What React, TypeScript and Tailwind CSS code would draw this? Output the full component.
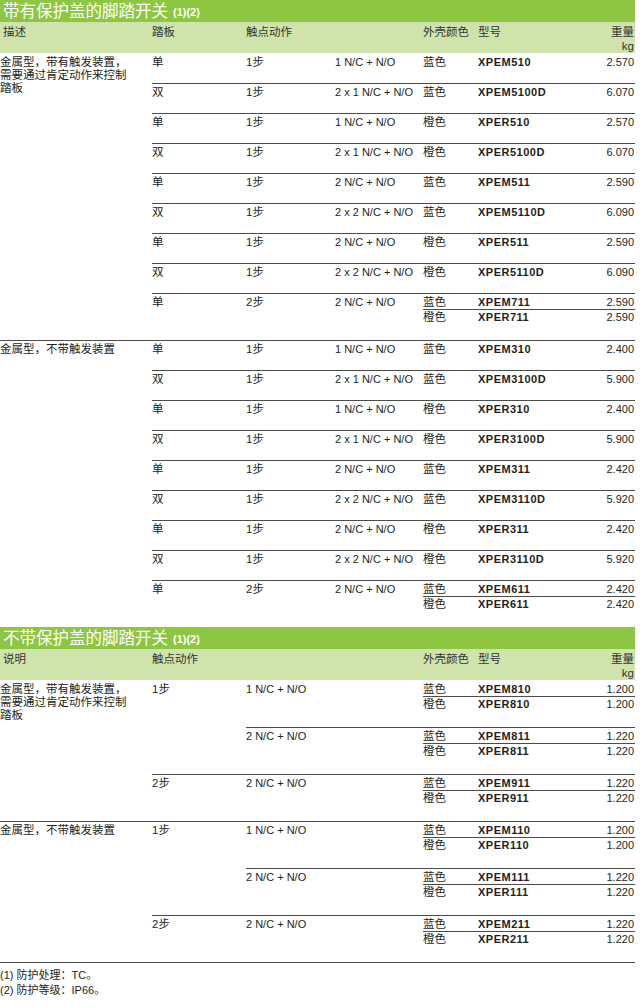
import React from 'react';

type Sub = { color: string; model: string; weight: string };
type Row = { pedal: string; step: string; contact: string; subs: Sub[] };

const descA = ['金属型，带有触发装置，', '需要通过肯定动作来控制', '踏板'];
const descB = ['金属型，不带触发装置'];

const blue = (model: string, weight: string): Sub => ({ color: '蓝色', model, weight });
const orange = (model: string, weight: string): Sub => ({ color: '橙色', model, weight });

const groupA: Row[] = [
  { pedal: '单', step: '1步', contact: '1 N/C + N/O', subs: [blue('XPEM510', '2.570')] },
  { pedal: '双', step: '1步', contact: '2 x 1 N/C + N/O', subs: [blue('XPEM5100D', '6.070')] },
  { pedal: '单', step: '1步', contact: '1 N/C + N/O', subs: [orange('XPER510', '2.570')] },
  { pedal: '双', step: '1步', contact: '2 x 1 N/C + N/O', subs: [orange('XPER5100D', '6.070')] },
  { pedal: '单', step: '1步', contact: '2 N/C + N/O', subs: [blue('XPEM511', '2.590')] },
  { pedal: '双', step: '1步', contact: '2 x 2 N/C + N/O', subs: [blue('XPEM5110D', '6.090')] },
  { pedal: '单', step: '1步', contact: '2 N/C + N/O', subs: [orange('XPER511', '2.590')] },
  { pedal: '双', step: '1步', contact: '2 x 2 N/C + N/O', subs: [orange('XPER5110D', '6.090')] },
  { pedal: '单', step: '2步', contact: '2 N/C + N/O', subs: [blue('XPEM711', '2.590'), orange('XPER711', '2.590')] },
];

const groupB: Row[] = [
  { pedal: '单', step: '1步', contact: '1 N/C + N/O', subs: [blue('XPEM310', '2.400')] },
  { pedal: '双', step: '1步', contact: '2 x 1 N/C + N/O', subs: [blue('XPEM3100D', '5.900')] },
  { pedal: '单', step: '1步', contact: '1 N/C + N/O', subs: [orange('XPER310', '2.400')] },
  { pedal: '双', step: '1步', contact: '2 x 1 N/C + N/O', subs: [orange('XPER3100D', '5.900')] },
  { pedal: '单', step: '1步', contact: '2 N/C + N/O', subs: [blue('XPEM311', '2.420')] },
  { pedal: '双', step: '1步', contact: '2 x 2 N/C + N/O', subs: [blue('XPEM3110D', '5.920')] },
  { pedal: '单', step: '1步', contact: '2 N/C + N/O', subs: [orange('XPER311', '2.420')] },
  { pedal: '双', step: '1步', contact: '2 x 2 N/C + N/O', subs: [orange('XPER3110D', '5.920')] },
  { pedal: '单', step: '2步', contact: '2 N/C + N/O', subs: [blue('XPEM611', '2.420'), orange('XPER611', '2.420')] },
];

type Contact = { contact: string; subs: Sub[] };
type Step = { step: string; contacts: Contact[] };

const open1: Step[] = [
  {
    step: '1步',
    contacts: [
      { contact: '1 N/C + N/O', subs: [blue('XPEM810', '1.200'), orange('XPER810', '1.200')] },
      { contact: '2 N/C + N/O', subs: [blue('XPEM811', '1.220'), orange('XPER811', '1.220')] },
    ],
  },
  {
    step: '2步',
    contacts: [{ contact: '2 N/C + N/O', subs: [blue('XPEM911', '1.220'), orange('XPER911', '1.220')] }],
  },
];

const open2: Step[] = [
  {
    step: '1步',
    contacts: [
      { contact: '1 N/C + N/O', subs: [blue('XPEM110', '1.200'), orange('XPER110', '1.200')] },
      { contact: '2 N/C + N/O', subs: [blue('XPEM111', '1.220'), orange('XPER111', '1.220')] },
    ],
  },
  {
    step: '2步',
    contacts: [{ contact: '2 N/C + N/O', subs: [blue('XPEM211', '1.220'), orange('XPER211', '1.220')] }],
  },
];

const Title = ({ text }: { text: string }) => (
  <div className="h-[22px] bg-[#8dc641] pl-[3px] flex items-end pb-[1px] text-white">
    <span className="text-[16.5px] leading-[20px]">{text}</span>
    <span className="ml-[5px] mb-[2px] text-[11px] leading-[13px] font-bold">(1)(2)</span>
  </div>
);

// colour / model / weight lines on the right side
const SubList = ({ subs }: { subs: Sub[] }) => (
  <div className="w-[212px] flex flex-col">
    {subs.map((s, i) => (
      <div
        key={s.model}
        className={`flex leading-[13px] ${i === 0 ? 'h-[15px] pt-[2px]' : 'border-t border-[#4d4d4d] h-[16px] pt-[1px]'}`}
      >
        <span className="w-[55px] text-[11.5px]">{s.color}</span>
        <span className="flex-1 text-[11px] font-bold tracking-[0.5px]">{s.model}</span>
        <span className="text-[11px] pr-[1px]">{s.weight}</span>
      </div>
    ))}
  </div>
);

const Desc = ({ lines }: { lines: string[] }) => (
  <div className="w-[152px] shrink-0 pt-[2px] text-[11.5px] leading-[13px]">
    {lines.map((l) => (
      <div key={l}>{l}</div>
    ))}
  </div>
);

const CoveredGroup = ({ desc, rows, first }: { desc: string[]; rows: Row[]; first?: boolean }) => (
  <div className={`flex border-t ${first ? 'border-transparent' : 'border-[#4d4d4d]'}`}>
    <Desc lines={desc} />
    <div className="flex-1 flex flex-col">
      {rows.map((r, i) => (
        <div
          key={i}
          className={`flex leading-[13px] ${i === 0 ? '' : 'border-t border-[#4d4d4d]'} ${
            r.subs.length > 1 ? (i === 0 ? 'h-[46px]' : 'h-[47px]') : i === 0 ? 'h-[29px]' : 'h-[30px]'
          }`}
        >
          <span className="w-[94px] pt-[2px] text-[11.5px]">{r.pedal}</span>
          <span className="w-[89px] pt-[2px] text-[11.5px]">{r.step}</span>
          <span className="w-[88px] pt-[2px] text-[11px] whitespace-nowrap">{r.contact}</span>
          <SubList subs={r.subs} />
        </div>
      ))}
    </div>
  </div>
);

const OpenGroup = ({ desc, steps, first }: { desc: string[]; steps: Step[]; first?: boolean }) => (
  <div className={`flex border-t ${first ? 'border-transparent' : 'border-[#4d4d4d]'}`}>
    <Desc lines={desc} />
    <div className="flex-1 flex flex-col">
      {steps.map((s, i) => (
        <div key={s.step} className={`flex ${i === 0 ? '' : 'border-t border-[#4d4d4d]'}`}>
          <span className="w-[94px] pt-[2px] text-[11.5px] leading-[13px]">{s.step}</span>
          <div className="flex-1 flex flex-col">
            {s.contacts.map((c, j) => (
              <div
                key={c.contact}
                className={`flex leading-[13px] ${j === 0 ? 'h-[46px]' : 'h-[47px] border-t border-[#4d4d4d]'}`}
              >
                <span className="w-[177px] pt-[2px] text-[11px]">{c.contact}</span>
                <SubList subs={c.subs} />
              </div>
            ))}
          </div>
        </div>
      ))}
    </div>
  </div>
);

const App: React.FC = () => {
  return (
    <div className="w-[642px] h-[1007px] bg-white text-[#231f20] font-['Liberation_Sans','Noto_Sans_CJK_SC',sans-serif]">
      <div className="w-[635px]">
        {/* section 1 */}
        <Title text="带有保护盖的脚踏开关" />
        <div className="h-[31px] bg-[#cfe4aa] flex text-[11.5px] leading-[14px] pt-[3px] text-[#333]">
          <span className="w-[152px] pl-[3px]">描述</span>
          <span className="w-[94px]">踏板</span>
          <span className="w-[177px]">触点动作</span>
          <span className="w-[55px]">外壳颜色</span>
          <span className="flex-1">型号</span>
          <span className="text-right pr-[1px]">
            重量
            <br />
            kg
          </span>
        </div>
        <CoveredGroup desc={descA} rows={groupA} first />
        <CoveredGroup desc={descB} rows={groupB} />

        {/* section 2 */}
        <Title text="不带保护盖的脚踏开关" />
        <div className="h-[31px] bg-[#cfe4aa] flex text-[11.5px] leading-[14px] pt-[3px] text-[#333]">
          <span className="w-[152px] pl-[3px]">说明</span>
          <span className="w-[271px]">触点动作</span>
          <span className="w-[55px]">外壳颜色</span>
          <span className="flex-1">型号</span>
          <span className="text-right pr-[1px]">
            重量
            <br />
            kg
          </span>
        </div>
        <OpenGroup desc={descA} steps={open1} first />
        <OpenGroup desc={descB} steps={open2} />

        {/* notes */}
        <div className="border-t border-[#4d4d4d] pt-[5px] text-[11px] leading-[15px]">
          <div>(1) 防护处理：TC。</div>
          <div>(2) 防护等级：IP66。</div>
        </div>
      </div>
    </div>
  );
};

export default App;
